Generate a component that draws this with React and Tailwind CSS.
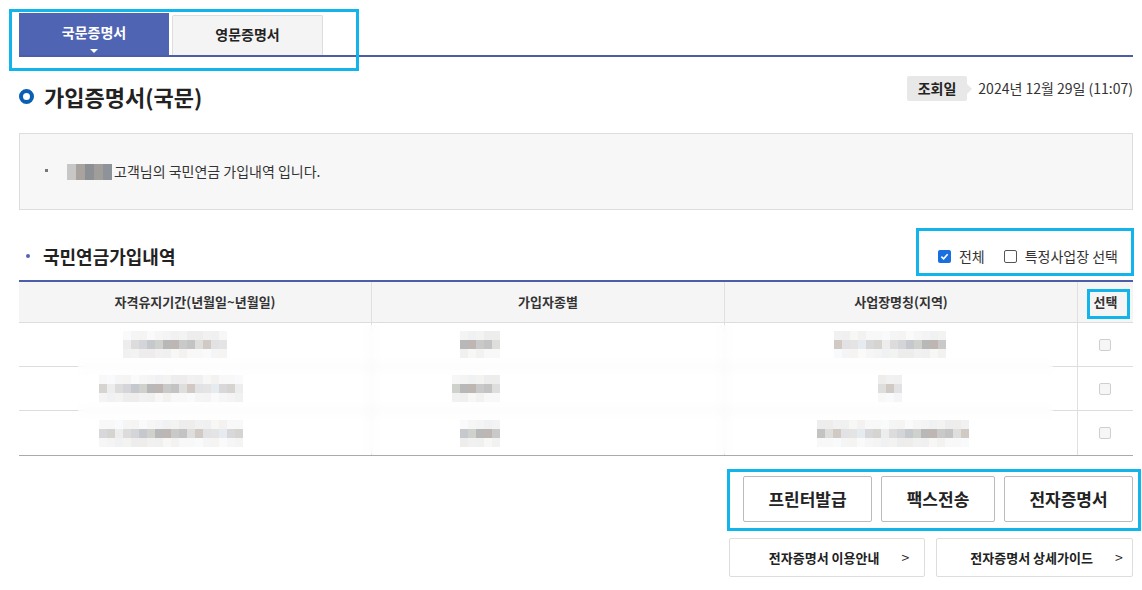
import React from 'react';

const FONT = {fontFamily: '"Noto Sans CJK KR", "Noto Sans", sans-serif'};

const GRAYS = ['#c3c3c3', '#d6d4d0', '#bdb6b3', '#e6ebf0', '#cfd1cc', '#e2e2e4', '#d4d5d8', '#dedfdc', '#ededed', '#c9c9c9', '#d8d8db', '#b8b8b8', '#e4e4e4', '#c5c8cc', '#d1cac4', '#dcdcdc'];

const Mosaic = ({count, seed = 1}) => {
  const cells = (row) => Array.from({length: count}).map((_, i) => {
    const c = GRAYS[(i * 7 + seed * 3 + row * 5) % GRAYS.length]
    return <span key={i} className="block w-[8px] h-[9px]" style={{backgroundColor: row === 1 ? c : c + '40'}} />
  })
  return (
    <div className="relative z-10 inline-flex flex-col">
      <div className="flex">{cells(0)}</div>
      <div className="flex">{cells(1)}</div>
      <div className="flex">{cells(2)}</div>
    </div>
  )
}

// left offsets of the masked values inside each cell
const rows = [
  {a: 13, b: 5, c: 14, pa: 104, pb: 88, pc: 109, sa: 1, sb: 2, sc: 3},
  {a: 18, b: 6, c: 3, pa: 80, pb: 80, pc: 153, sa: 4, sb: 5, sc: 6},
  {a: 18, b: 5, c: 19, pa: 80, pb: 88, pc: 92, sa: 7, sb: 8, sc: 9},
]

const SmallBox = () => (
  <span className="relative z-10 inline-block w-[12px] h-[12px] rounded-[2px] border border-[#cfcfcf] bg-[#f6f6f6]" />
)

const App = () => {
  return (
    <div className="relative w-[1142px] h-[590px] bg-white text-[#333] overflow-hidden" style={FONT}>
      <div className="ml-[19px] w-[1114px]">
        {/* tabs */}
        <div className="flex items-end pt-[13px] border-b-2 border-[#4c5ea8]">
          <div className="w-[150px] h-[42px] bg-[#5064b4] flex flex-col items-center pt-[9px] text-white text-[14px] font-bold leading-[20px]">
            국문증명서
            <span className="mt-[7px] w-0 h-0 border-l-[4px] border-r-[4px] border-t-[4px] border-l-transparent border-r-transparent border-t-white" />
          </div>
          <div className="ml-[3px] w-[151px] h-[40px] bg-[#f4f4f4] border border-b-0 border-[#dddddd] rounded-t-[2px] flex items-center justify-center text-[14px] font-bold text-[#222] pb-[2px]">
            영문증명서
          </div>
        </div>

        {/* title row */}
        <div className="flex items-start justify-between mt-[19px]">
          <div className="flex items-center gap-[10px] pt-[4px]">
            <span className="w-[15px] h-[15px] rounded-full border-[4px] border-[#0a5fb4]" />
            <h1 className="text-[22px] font-bold text-[#222] leading-[32px]">가입증명서(국문)</h1>
          </div>
          <div className="flex items-center h-[25px]">
            <div className="relative h-[25px] px-[11px] bg-[#e8e8e8] rounded-[2px] flex items-center text-[14px] font-bold text-[#222]">
              조회일
              <span className="absolute right-[-5px] top-1/2 -translate-y-1/2 w-0 h-0 border-t-[5px] border-b-[5px] border-l-[5px] border-t-transparent border-b-transparent border-l-[#e8e8e8]" />
            </div>
            <span className="ml-[11px] text-[14px] text-[#333]">2024년 12월 29일 (11:07)</span>
          </div>
        </div>

        {/* info box */}
        <div className="mt-[21px] h-[77px] border border-[#dddddd] bg-[#f7f7f7] flex items-center pl-[25px]">
          <span className="w-[3px] h-[3px] bg-[#777] mr-[19px] -mt-[3px]" />
          <span className="flex w-[45px] h-[16px] mr-[2px]">
            <span className="flex-1 bg-[#c7c7c7]" />
            <span className="flex-1 bg-[#a8a39f]" />
            <span className="flex-1 bg-[#8c8f93]" />
            <span className="flex-1 bg-[#a19d9a]" />
            <span className="flex-1 bg-[#8e939a]" />
          </span>
          <span className="text-[14px] text-[#333]">고객님의 국민연금 가입내역 입니다.</span>
        </div>

        {/* section title */}
        <div className="flex items-center justify-between mt-[31px] h-[30px]">
          <div className="flex items-center">
            <span className="w-[4px] h-[4px] rounded-full bg-[#5064b4] ml-[7px] mr-[13px]" />
            <h2 className="text-[18px] font-bold text-[#222]">국민연금가입내역</h2>
          </div>
          <div className="flex items-center text-[14px] text-[#333] pr-[15px] pt-[1px]">
            <span className="w-[13px] h-[13px] rounded-[2px] bg-[#1a6fe0] flex items-center justify-center">
              <svg width="9" height="9" viewBox="0 0 10 10"><path d="M1.5 5.2 L4 7.5 L8.5 2.5" stroke="white" strokeWidth="1.8" fill="none" /></svg>
            </span>
            <span className="ml-[8px]">전체</span>
            <span className="ml-[19px] w-[13px] h-[13px] rounded-[2px] border border-[#555] bg-white" />
            <span className="ml-[8px]">특정사업장 선택</span>
          </div>
        </div>

        {/* table */}
        <div className="relative mt-[9px] border-t-2 border-[#4c5ea8] border-b border-b-[#aaaaaa]">
          <div className="grid grid-cols-[353px_353px_353px_55px] h-[41px] bg-[#f5f5f5] border-b border-[#dddddd] text-[13px] font-bold text-[#333]">
            <div className="flex items-center justify-center border-r border-[#e0e0e0]">자격유지기간(년월일~년월일)</div>
            <div className="flex items-center justify-center border-r border-[#e0e0e0]">가입자종별</div>
            <div className="flex items-center justify-center border-r border-[#e0e0e0]">사업장명칭(지역)</div>
            <div className="flex items-center justify-center">선택</div>
          </div>
          {rows.map((r, i) => (
            <div key={i} className={`grid grid-cols-[353px_353px_353px_55px] h-[44px] ${i < 2 ? 'border-b border-[#dddddd]' : ''}`}>
              <div className="flex items-center border-r border-[#e0e0e0]" style={{paddingLeft: r.pa}}><Mosaic count={r.a} seed={r.sa} /></div>
              <div className="flex items-center border-r border-[#e0e0e0]" style={{paddingLeft: r.pb}}><Mosaic count={r.b} seed={r.sb} /></div>
              <div className="flex items-center border-r border-[#e0e0e0]" style={{paddingLeft: r.pc}}><Mosaic count={r.c} seed={r.sc} /></div>
              <div className="flex items-center justify-center pr-[1px]"><SmallBox /></div>
            </div>
          ))}
          {/* blurred privacy mask */}
          <div className="absolute left-[59px] top-[43px] w-[975px] h-[129px] backdrop-blur-[4px] bg-white/40" />
        </div>

        {/* buttons */}
        <div className="flex justify-end gap-[9px] mt-[20px]">
          <button className="w-[129px] h-[46px] border border-[#bbbbbb] rounded-[2px] bg-white text-[17px] font-bold text-[#222]">프린터발급</button>
          <button className="w-[114px] h-[46px] border border-[#bbbbbb] rounded-[2px] bg-white text-[17px] font-bold text-[#222]">팩스전송</button>
          <button className="w-[129px] h-[46px] border border-[#bbbbbb] rounded-[2px] bg-white text-[17px] font-bold text-[#222]">전자증명서</button>
        </div>
        <div className="flex justify-end gap-[11px] mt-[16px]">
          <button className="w-[196px] h-[39px] border border-[#dddddd] rounded-[2px] bg-white flex items-center justify-center gap-[22px] text-[13px] font-bold text-[#222] pl-[24px]">
            전자증명서 이용안내
            <span className="font-normal text-[14px]">&gt;</span>
          </button>
          <button className="w-[197px] h-[39px] border border-[#dddddd] rounded-[2px] bg-white flex items-center justify-center gap-[22px] text-[13px] font-bold text-[#222] pl-[24px]">
            전자증명서 상세가이드
            <span className="font-normal text-[14px]">&gt;</span>
          </button>
        </div>
      </div>

      {/* highlight annotations */}
      <div className="absolute left-[9px] top-[9px] w-[350px] h-[62px] border-[3px] border-[#12b5ea] pointer-events-none" />
      <div className="absolute left-[916px] top-[228px] w-[218px] h-[48px] border-[3px] border-[#12b5ea] pointer-events-none" />
      <div className="absolute left-[1087px] top-[289px] w-[43px] h-[30px] border-[3px] border-[#12b5ea] pointer-events-none" />
      <div className="absolute left-[727px] top-[469px] w-[414px] h-[62px] border-[3px] border-[#12b5ea] pointer-events-none" />
    </div>
  );
};

export default App;
